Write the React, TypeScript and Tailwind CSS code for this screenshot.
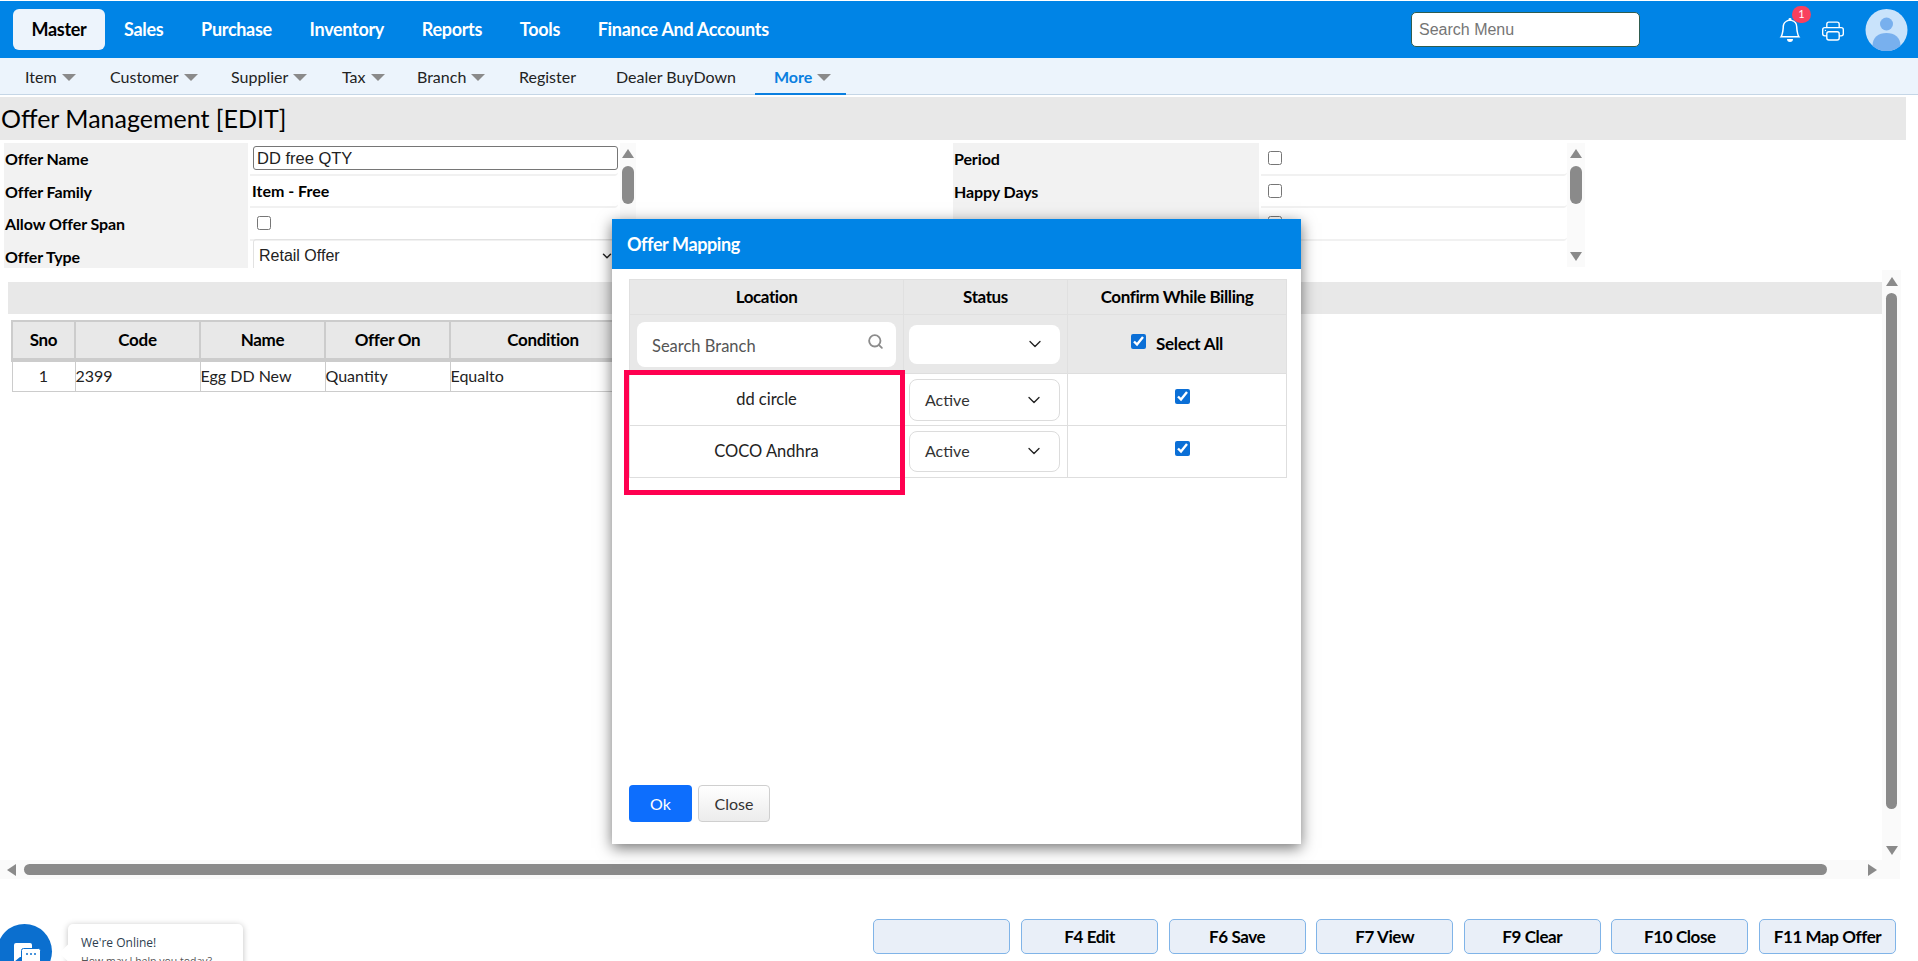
import { ChevronDown, Search } from 'lucide-react'
import { BsBell, BsPrinter } from 'react-icons/bs'

const mainMenu = ['Sales', 'Purchase', 'Inventory', 'Reports', 'Tools', 'Finance And Accounts']

const subMenu = [
    { label: 'Item', caret: true, width: 'w-[85px]' },
    { label: 'Customer', caret: true, width: 'w-[121px]' },
    { label: 'Supplier', caret: true, width: 'w-[111px]' },
    { label: 'Tax', caret: true, width: 'w-[75px]' },
    { label: 'Branch', caret: true, width: 'w-[102px]' },
    { label: 'Register', caret: false, width: 'w-[97px]' },
    { label: 'Dealer BuyDown', caret: false, width: 'w-[139px]' },
]

const footerButtons = ['', 'F4 Edit', 'F6 Save', 'F7 View', 'F9 Clear', 'F10 Close', 'F11 Map Offer']

const Caret = () => (
    <span className="ml-[5px] mt-[2px] inline-block h-0 w-0 border-x-[7px] border-t-[7px] border-x-transparent border-t-[#8a8a8a]" />
)

const ArrowUp = () => <span className="h-0 w-0 border-x-[6px] border-b-[9px] border-x-transparent border-b-[#8a8a8a]" />
const ArrowDown = () => <span className="h-0 w-0 border-x-[6px] border-t-[9px] border-x-transparent border-t-[#8a8a8a]" />

const FormRow = ({ label, children, labelWidth = 'w-[244px]' }: { label: string; children?: React.ReactNode; labelWidth?: string }) => (
    <div className="flex h-[32.5px] shrink-0">
        <div className={`flex ${labelWidth} shrink-0 items-center bg-[#f2f2f2] pl-[1px] text-[16px] font-bold tracking-[-0.1px] text-black`}>{label}</div>
        <div className="ml-[2px] flex min-w-0 flex-1 items-center rounded-br-[4px] border-b-2 border-[#f1f1f1] pl-[3px]">{children}</div>
    </div>
)

const CheckBox = () => <input type="checkbox" className="ml-[4px] h-[14px] w-[14px]" readOnly />

const Blue = () => <input type="checkbox" checked readOnly className="h-[15px] w-[15px] accent-[#0b6fd6]" />

const StatusSelect = ({ value, height }: { value: string; height: string }) => (
    <div className={`-ml-[1px] flex ${height} w-[151px] items-center justify-between rounded-[8px] border border-[#dcdcdc] bg-white pl-[15px] pr-[15px] text-[16px] text-[#333]`}>
        <span>{value}</span>
        <ChevronDown size={20} strokeWidth={1.6} className="text-[#222]" />
    </div>
)

const App = () => {
    return (
        <div className="relative flex h-[961px] w-[1918px] flex-col overflow-hidden bg-white font-['Lato',sans-serif] text-black">
            {/* Top menu */}
            <div className="mt-[1px] flex h-[57px] shrink-0 items-center bg-[#0084e6] pl-[13px] pr-[10px]">
                <div className="flex h-[41px] w-[92px] items-center justify-center rounded-[6px] bg-[#edf4fc] text-[18px] font-bold tracking-[-0.3px] text-black">Master</div>
                <div className="ml-[19px] flex gap-[37.7px] text-[18px] font-bold tracking-[-0.3px] text-white">
                    {mainMenu.map((m) => <span key={m}>{m}</span>)}
                </div>
                <div className="ml-auto flex h-[35px] w-[229px] items-center rounded-[5px] border border-[#2f5d50] bg-white pl-[7px] font-['Liberation_Sans',sans-serif] text-[16px] text-[#757575]">Search Menu</div>
                <div className="relative ml-[138px] h-[40px] w-[24px]">
                    <BsBell size={24} className="absolute left-0 top-[8px] text-white" />
                    <span className="absolute left-[14px] top-[-4px] flex h-[17px] w-[19px] items-center justify-center rounded-full bg-[#f9405e] text-[11px] text-white">1</span>
                </div>
                <BsPrinter size={22} className="ml-[20px] mt-[2px] text-white" />
                <svg viewBox="0 0 42 42" className="ml-[21px] h-[42px] w-[43px]">
                    <circle cx="21" cy="21" r="21" fill="#c9e3fb" />
                    <circle cx="21" cy="15" r="6.5" fill="#78b0ee" />
                    <path d="M7 37c0-9 6-13 14-13s14 4 14 13a21 21 0 0 1-28 0z" fill="#78b0ee" />
                </svg>
            </div>

            {/* Sub menu */}
            <div className="flex h-[37px] shrink-0 items-center border-b border-[#c5d6e6] bg-[#ecf4fc] pl-[25px] pt-[1px] text-[16px] text-[#222]">
                {subMenu.map((s) => (
                    <span key={s.label} className={`flex items-center ${s.width}`}>
                        {s.label}
                        {s.caret && <Caret />}
                    </span>
                ))}
                <span className="relative flex h-full w-[91px] items-center pl-[19px] font-bold text-[#0a7fe0]">
                    More
                    <Caret />
                    <span className="absolute bottom-[-1px] left-0 h-[2px] w-[91px] bg-[#0a7fe0]" />
                </span>
            </div>

            {/* Page title */}
            <div className="mt-[2px] flex h-[43px] w-[1906px] shrink-0 items-center bg-[#e8e8e8] pl-[1px] text-[25px] text-black">Offer Management [EDIT]</div>

            {/* Offer form */}
            <div className="mt-[3px] flex h-[125px] shrink-0 overflow-hidden pl-[4px]">
                <div className="flex w-[614px] flex-col">
                    <FormRow label="Offer Name">
                        <div className="flex h-[24px] w-[365px] items-center rounded-[3px] border border-[#767676] pl-[3px] font-['Liberation_Sans',sans-serif] text-[16.5px] text-[#222]">DD free QTY</div>
                    </FormRow>
                    <FormRow label="Offer Family">
                        <span className="-ml-[1px] text-[16px] font-bold">Item - Free</span>
                    </FormRow>
                    <FormRow label="Allow Offer Span">
                        <CheckBox />
                    </FormRow>
                    <FormRow label="Offer Type">
                        <div className="flex h-[33px] w-[365px] items-center justify-between rounded-t-[3px] border border-[#e2e2e2] pl-[5px] pr-[3px] font-['Liberation_Sans',sans-serif] text-[16px] text-[#222]">
                            Retail Offer
                            <ChevronDown size={14} strokeWidth={2.5} />
                        </div>
                    </FormRow>
                </div>
                <div className="relative ml-[2px] flex w-[16px] flex-col items-center justify-between bg-[#fafafa] py-[6px]">
                    <ArrowUp />
                    <span className="absolute left-[2px] top-[23px] h-[38px] w-[12px] rounded-full bg-[#8a8a8a]" />
                    <ArrowDown />
                </div>

                <div className="ml-[317px] flex w-[614px] flex-col">
                    <FormRow label="Period" labelWidth="w-[306px]"><CheckBox /></FormRow>
                    <FormRow label="Happy Days" labelWidth="w-[306px]"><CheckBox /></FormRow>
                    <FormRow label="" labelWidth="w-[306px]"><CheckBox /></FormRow>
                </div>
                <div className="relative flex h-[124px] w-[18px] flex-col items-center justify-between bg-[#fafafa] py-[6px]">
                    <ArrowUp />
                    <span className="absolute left-[3px] top-[23px] h-[38px] w-[12px] rounded-full bg-[#8a8a8a]" />
                    <ArrowDown />
                </div>
            </div>

            {/* Grid area */}
            <div className="mt-[2px] flex h-[590px] shrink-0">
                <div className="flex w-[1882px] flex-col pl-[8px] pt-[12px]">
                    <div className="h-[32px] bg-[#e8e8e8]" />
                    <table className="ml-[3px] mt-[6px] w-[626px] table-fixed border-collapse text-[17px]">
                        <thead>
                            <tr className="h-[39px] bg-[#e8e8e8] font-bold">
                                <th className="w-[63px] border-[2px] border-b-[4px] border-[#cccccc] tracking-[-0.3px]">Sno</th>
                                <th className="w-[125px] border-[2px] border-b-[4px] border-[#cccccc] tracking-[-0.3px]">Code</th>
                                <th className="w-[125px] border-[2px] border-b-[4px] border-[#cccccc] tracking-[-0.3px]">Name</th>
                                <th className="w-[125px] border-[2px] border-b-[4px] border-[#cccccc] tracking-[-0.3px]">Offer On</th>
                                <th className="border-[2px] border-b-[4px] border-[#cccccc] tracking-[-0.3px]">Condition</th>
                            </tr>
                        </thead>
                        <tbody>
                            <tr className="h-[31px] text-[16px] text-[#222]">
                                <td className="border border-[#cccccc] text-center">1</td>
                                <td className="border border-[#cccccc]">2399</td>
                                <td className="border border-[#cccccc]">Egg DD New</td>
                                <td className="border border-[#cccccc]">Quantity</td>
                                <td className="border border-[#cccccc]">Equalto</td>
                            </tr>
                        </tbody>
                    </table>
                </div>
                <div className="relative flex w-[19px] flex-col items-center justify-between bg-[#fafafa] pb-[5px] pt-[7px]">
                    <ArrowUp />
                    <span className="absolute top-[23px] h-[516px] w-[11px] rounded-full bg-[#8a8a8a]" />
                    <ArrowDown />
                </div>
            </div>

            {/* Horizontal scroll */}
            <div className="relative flex h-[19px] w-[1900px] shrink-0 items-center justify-between bg-[#fafafa] pl-[7px] pr-[23px]">
                <span className="h-0 w-0 border-y-[6px] border-r-[9px] border-y-transparent border-r-[#8a8a8a]" />
                <span className="absolute left-[24px] h-[11px] w-[1803px] rounded-full bg-[#8a8a8a]" />
                <span className="h-0 w-0 border-y-[6px] border-l-[9px] border-y-transparent border-l-[#8a8a8a]" />
            </div>

            {/* Footer buttons */}
            <div className="mt-[40px] flex justify-end gap-[10.6px] pr-[22px]">
                {footerButtons.map((b, i) => (
                    <button key={i} className="flex h-[35px] w-[137px] items-center justify-center rounded-[5px] border border-[#80b4e8] bg-[#e9eff8] text-[17px] font-bold tracking-[-0.4px] text-black">{b}</button>
                ))}
            </div>

            {/* Chat widget */}
            <div className="absolute left-[-3px] top-[924px] flex h-[55px] w-[55px] items-center justify-center rounded-full bg-[#0b6fcf]">
                <svg viewBox="0 0 30 30" className="ml-[4px] mt-[6px] h-[30px] w-[30px]">
                    <path d="M2 5a2 2 0 0 1 2-2h14a2 2 0 0 1 2 2v10a2 2 0 0 1-2 2H8l-6 5z" fill="#fff" />
                    <rect x="9.5" y="8.5" width="19" height="17" rx="2" fill="#fff" stroke="#0b6fcf" />
                    <circle cx="15" cy="14" r="1" fill="#0b6fcf" />
                    <circle cx="19" cy="14" r="1" fill="#0b6fcf" />
                    <circle cx="23" cy="14" r="1" fill="#0b6fcf" />
                </svg>
            </div>
            <div className="absolute left-[68px] top-[924px] h-[60px] w-[175px] rounded-[5px] bg-white pl-[13px] pt-[10px] shadow-[0_1px_6px_rgba(0,0,0,0.25)]">
                <span className="absolute left-[-6px] top-[23px] h-[12px] w-[12px] rotate-45 bg-white" />
                <div className="font-['Open_Sans',sans-serif] text-[12px] leading-[18px] text-[#2c3e50]">We're Online!</div>
                <div className="font-['Open_Sans',sans-serif] text-[10.5px] leading-[18px] text-[#555]">How may I help you today?</div>
            </div>

            {/* Offer Mapping dialog */}
            <div className="absolute left-[612px] top-[219px] flex h-[625px] w-[689px] flex-col bg-white shadow-[0_4px_14px_rgba(0,0,0,0.55)]">
                <div className="flex h-[50px] shrink-0 items-center bg-[#0084e6] pl-[15px] text-[18px] font-bold tracking-[-0.4px] text-white">Offer Mapping</div>
                <div className="relative flex-1 px-[17px] pt-[10px]">
                    <table className="w-[658px] table-fixed border-collapse text-[16px]">
                        <thead>
                            <tr className="h-[35px] bg-[#e8e8e8] text-[17px] font-bold">
                                <th className="w-[274px] border border-[#e0e0e0] tracking-[-0.4px]">Location</th>
                                <th className="w-[164px] border border-[#e0e0e0] tracking-[-0.4px]">Status</th>
                                <th className="border border-[#e0e0e0] tracking-[-0.4px]">Confirm While Billing</th>
                            </tr>
                        </thead>
                        <tbody>
                            <tr className="h-[59px] bg-[#e8e8e8]">
                                <td className="border-x border-[#e0e0e0] px-[7px]">
                                    <div className="flex h-[45px] items-center justify-between rounded-[8px] bg-white pl-[15px] pr-[12px] text-[16.5px] text-[#555]">
                                        <span className="mt-[5px]">Search Branch</span>
                                        <Search size={17} strokeWidth={2.6} className="mb-[5px] text-[#8c8c8c]" />
                                    </div>
                                </td>
                                <td className="border-x border-[#e0e0e0] px-[6px]">
                                    <StatusSelect value="" height="h-[39px] border-none" />
                                </td>
                                <td className="border-x border-[#e0e0e0]">
                                    <div className="flex items-center justify-center gap-[10px] text-[17px] font-bold tracking-[-0.3px]">
                                        <span className="mb-[5px] flex"><Blue /></span>
                                        <span>Select All</span>
                                    </div>
                                </td>
                            </tr>
                            <tr className="h-[52px]">
                                <td className="border border-[#dedede] text-center text-[16.5px] text-[#222]">dd circle</td>
                                <td className="border border-[#dedede] px-[6px]"><StatusSelect value="Active" height="h-[42px]" /></td>
                                <td className="border border-[#dedede] text-center"><div className="mb-[7px] ml-[11px] flex justify-center"><Blue /></div></td>
                            </tr>
                            <tr className="h-[52px]">
                                <td className="border border-[#dedede] text-center text-[16.5px] text-[#222]">COCO Andhra</td>
                                <td className="border border-[#dedede] px-[6px]"><StatusSelect value="Active" height="h-[41px] pb-[2px]" /></td>
                                <td className="border border-[#dedede] text-center"><div className="mb-[7px] ml-[11px] flex justify-center"><Blue /></div></td>
                            </tr>
                        </tbody>
                    </table>
                    {/* annotation box */}
                    <div className="absolute left-[12px] top-[101px] h-[125px] w-[281px] border-[5px] border-[#ff0050]" />
                </div>
                <div className="flex gap-[6px] px-[17px] pb-[22px]">
                    <button className="h-[37px] w-[63px] rounded-[4px] bg-[#0d6efd] text-[16px] text-white">Ok</button>
                    <button className="h-[37px] w-[72px] rounded-[4px] border border-[#cfcfcf] bg-gradient-to-b from-white to-[#ececec] text-[16px] text-[#333]">Close</button>
                </div>
            </div>
        </div>
    )
}

export default App
